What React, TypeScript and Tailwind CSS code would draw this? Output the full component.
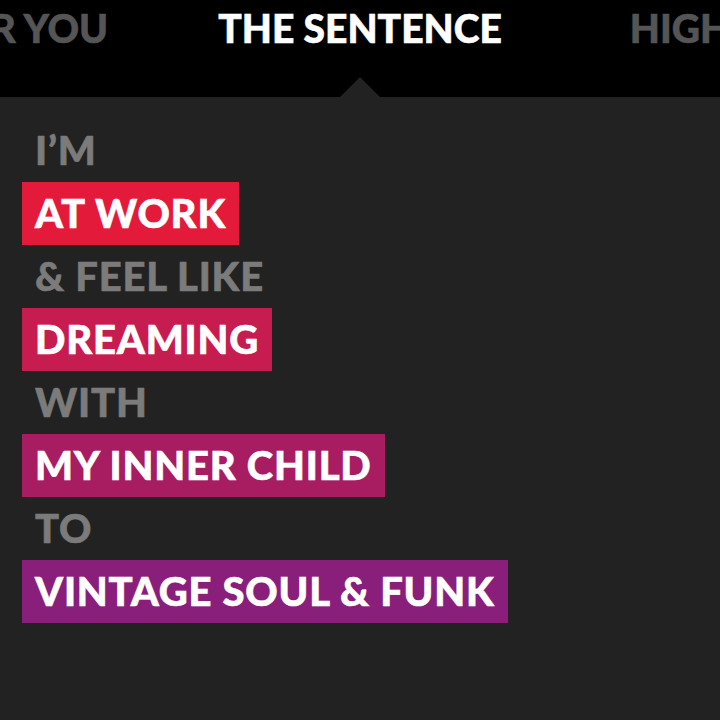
const lines = [
  { text: "I’M", color: "" },
  { text: "AT WORK", color: "bg-[#e41a3b]" },
  { text: "& FEEL LIKE", color: "" },
  { text: "DREAMING", color: "bg-[#c71c4f]" },
  { text: "WITH", color: "" },
  { text: "MY INNER CHILD", color: "bg-[#a81c62]" },
  { text: "TO", color: "" },
  { text: "VINTAGE SOUL & FUNK", color: "bg-[#891f7b]" },
];

export default function App() {
  return (
    <div className="w-[720px] h-[720px] bg-[#222222] overflow-hidden font-['Lato',sans-serif] font-black uppercase [-webkit-text-stroke:0.6px_currentColor]">
      <header className="relative h-[97px] bg-black grid grid-cols-[1fr_auto_1fr] text-[39px] leading-none whitespace-nowrap">
        <div className="flex justify-end overflow-hidden pr-[110px] pt-[9px] text-[#555555]">
          <span>For You</span>
        </div>
        <div className="pt-[9px] text-white">The Sentence</div>
        <div className="flex overflow-hidden pl-[128px] pt-[9px] text-[#555555]">
          <span>Highlights</span>
        </div>
        <div className="absolute left-[340px] bottom-0 w-0 h-0 border-l-[20px] border-r-[20px] border-b-[20px] border-l-transparent border-r-transparent border-b-[#222222]" />
      </header>
      <main className="pt-[22px] pl-[22px] flex flex-col items-start text-[40px] leading-[63px] tracking-[0.02em]">
        {lines.map((line, idx) =>
          line.color ? (
            <div key={idx} className={`${line.color} h-[63px] px-[13px] text-white`}>
              {line.text}
            </div>
          ) : (
            <div key={idx} className="h-[63px] px-[13px] text-[#7b7b7b]">
              {line.text}
            </div>
          )
        )}
      </main>
    </div>
  );
}
